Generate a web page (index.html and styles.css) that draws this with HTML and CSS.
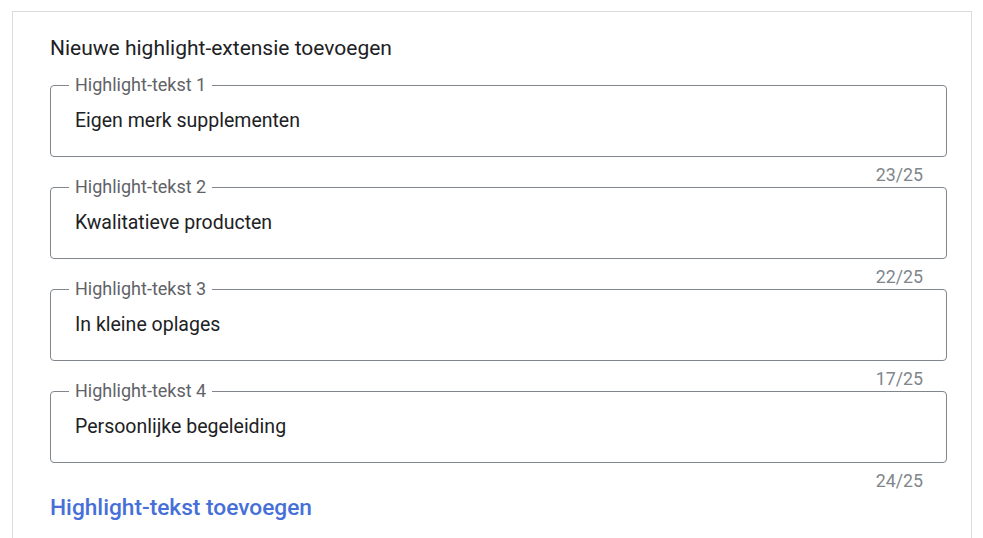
FILE: index.html
```html
<!DOCTYPE html>
<html>
<head>
  <meta charset="utf-8" />
  <title>Highlight-extensie</title>
  <meta name="viewport" content="width=device-width, initial-scale=1">
  <link rel="stylesheet" href="styles.css">
</head>
<body>
  <div class="card">
    <h2 class="title">Nieuwe highlight-extensie toevoegen</h2>

    <div class="field">
      <fieldset class="outline">
        <legend>Highlight-tekst 1</legend>
        <input type="text" value="Eigen merk supplementen">
      </fieldset>
      <div class="counter">23/25</div>
    </div>

    <div class="field">
      <fieldset class="outline">
        <legend>Highlight-tekst 2</legend>
        <input type="text" value="Kwalitatieve producten">
      </fieldset>
      <div class="counter">22/25</div>
    </div>

    <div class="field">
      <fieldset class="outline">
        <legend>Highlight-tekst 3</legend>
        <input type="text" value="In kleine oplages">
      </fieldset>
      <div class="counter">17/25</div>
    </div>

    <div class="field">
      <fieldset class="outline">
        <legend>Highlight-tekst 4</legend>
        <input type="text" value="Persoonlijke begeleiding">
      </fieldset>
      <div class="counter">24/25</div>
    </div>

    <a class="add-link" href="#">Highlight-tekst toevoegen</a>
  </div>
</body>
</html>
```

FILE: styles.css
```css
html, body {
  margin: 0px;
  padding: 0px;
  background: #fff;
  font-family: Roboto, "Noto Sans", Arial, sans-serif;
  overflow: hidden;
}
.card {
  margin: 11px 0 0 12px;
  width: 960px;
  height: 527px;
  border: 1px solid #dadce0;
  border-bottom: none;
  box-sizing: border-box;
  padding: 24px 24px 0 37px;
}
.title {
  margin: 0;
  font-size: 21px;
  font-weight: 400;
  color: #202124;
  line-height: 24px;
}
.field {
  margin-top: 14px;
}
.field + .field {
  margin-top: 0;
}
.outline {
  margin: 0;
  padding: 0 24px 0 24px;
  height: 83px;
  box-sizing: border-box;
  border: 1px solid #80868b;
  border-radius: 4px;
  min-width: 0;
}
.outline legend {
  margin-left: -6px;
  padding: 0 6px;
  font-size: 18px;
  line-height: 22px;
  color: #5f6368;
}
.outline input {
  display: block;
  width: 100%;
  border: none;
  outline: none;
  padding: 0;
  margin: 13px 0 0 0;
  font-family: inherit;
  font-size: 19.5px;
  line-height: 24px;
  color: #202124;
  background: transparent;
}
.counter {
  text-align: right;
  padding-right: 24px;
  font-size: 17.8px;
  line-height: 20px;
  margin-top: 8px;
  margin-bottom: -9px;
  color: #80868b;
}
.add-link {
  display: inline-block;
  margin-top: 12px;
  font-size: 22.7px;
  line-height: 28px;
  font-weight: 500;
  color: #4670d8;
  text-decoration: none;
}
```
